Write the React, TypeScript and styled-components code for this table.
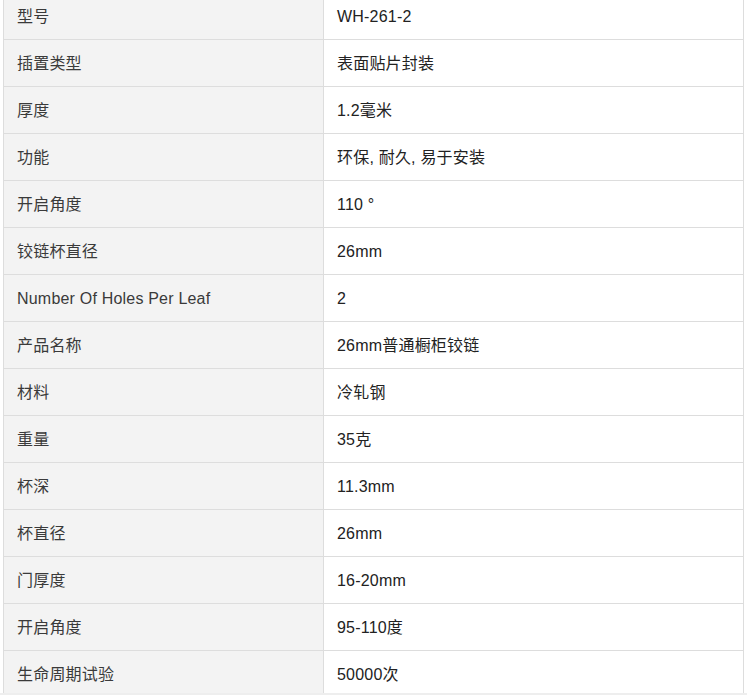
import { memo } from "react"
import styled, { createGlobalStyle } from "styled-components"

const GlobalStyle = createGlobalStyle`
  html, body {
    margin: 0;
    padding: 0;
    background: #ffffff;
  }
  body {
    font-family: "Liberation Sans", Arial, "Noto Sans CJK SC", sans-serif;
    color: #333333;
  }
`

const Viewport = styled.div`
  height: 693px;
  overflow: hidden;
  padding: 0 3px 0 3px;
`

const Track = styled.div`
  height: 2px;
  background-color: #eeeeee;
`

const SpecTable = styled.table`
  width: 741px;
  margin-top: -8px;
  border-collapse: collapse;
  table-layout: fixed;
  font-size: 16px;
  line-height: 20px;
  letter-spacing: 0.2px;
`

const Row = styled.tr`
  height: 47px;
`

const Cell = styled.td<{ $head?: boolean }>`
  box-sizing: border-box;
  width: ${props => props.$head ? "320px" : "auto"};
  border: 1px solid #dddddd;
  padding: 2px 13px 0;
  vertical-align: middle;
  background-color: ${props => props.$head ? "#f3f3f3" : "#ffffff"};
  color: ${props => props.$head ? "#3a3a3a" : "#222222"};
`

const specs: [string, string][] = [
  ["型号", "WH-261-2"],
  ["插置类型", "表面贴片封装"],
  ["厚度", "1.2毫米"],
  ["功能", "环保, 耐久, 易于安装"],
  ["开启角度", "110 °"],
  ["铰链杯直径", "26mm"],
  ["Number Of Holes Per Leaf", "2"],
  ["产品名称", "26mm普通橱柜铰链"],
  ["材料", "冷轧钢"],
  ["重量", "35克"],
  ["杯深", "11.3mm"],
  ["杯直径", "26mm"],
  ["门厚度", "16-20mm"],
  ["开启角度", "95-110度"],
  ["生命周期试验", "50000次"],
]

const App = memo(() => {
  return (
    <>
      <GlobalStyle />
      <Viewport>
        <SpecTable>
          <tbody>
            {specs.map(([name, value], i) => (
              <Row key={i}>
                <Cell $head>{name}</Cell>
                <Cell>{value}</Cell>
              </Row>
            ))}
          </tbody>
        </SpecTable>
      </Viewport>
      <Track />
    </>
  )
})

export default App
